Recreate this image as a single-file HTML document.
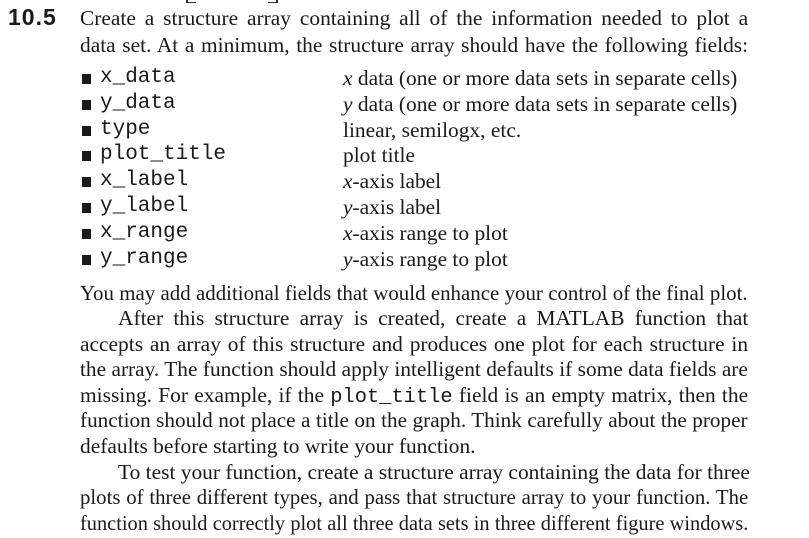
<!DOCTYPE html>
<html><head><meta charset="utf-8"><style>
body{margin:0;width:809px;height:538px;background:#fff;overflow:hidden;position:relative;color:#1a1a1a}
.l{position:absolute;left:80px;font-family:"Liberation Serif",serif;font-size:21px;line-height:26px;white-space:nowrap;transform-origin:0 0;transform:scaleX(1.02);width:655px;text-align:justify;text-align-last:justify}
.i{left:118px;width:618px}
.nj{text-align-last:left}
.m{font-family:"Liberation Mono",monospace;font-size:20px}
.b{position:absolute;left:82px;width:9px;height:10px;background:#1a1a1a}
.c{position:absolute;left:100px;font-family:"Liberation Mono",monospace;font-size:21px;line-height:26px}
.d{position:absolute;left:343px;font-family:"Liberation Serif",serif;font-size:21px;line-height:26px;transform-origin:0 0;transform:scaleX(1.02);white-space:nowrap}
</style></head><body>
<div style="position:absolute;left:186px;top:0;width:2px;height:3px;background:#333"></div>
<div style="position:absolute;left:186px;top:2px;width:10px;height:1px;background:#333"></div>
<div style="position:absolute;left:276px;top:0;width:2px;height:3px;background:#333"></div>
<div style="position:absolute;left:268px;top:2px;width:10px;height:1px;background:#333"></div>
<div style="position:absolute;left:8px;top:4px;font-family:'Liberation Sans',sans-serif;font-weight:bold;font-size:23px;line-height:26px;letter-spacing:1px">10.5</div>
<div class="l" style="top:5px">Create a structure array containing all of the information needed to plot a</div>
<div class="l" style="top:32px">data set. At a minimum, the structure array should have the following fields:</div>
<div class="b" style="top:74px"></div><div class="c" style="top:65px">x_data</div><div class="d" style="top:65px"><i>x</i> data (one or more data sets in separate cells)</div>
<div class="b" style="top:100px"></div><div class="c" style="top:91px">y_data</div><div class="d" style="top:91px"><i>y</i> data (one or more data sets in separate cells)</div>
<div class="b" style="top:126px"></div><div class="c" style="top:117px">type</div><div class="d" style="top:117px">linear, semilogx, etc.</div>
<div class="b" style="top:151px"></div><div class="c" style="top:142px">plot_title</div><div class="d" style="top:142px">plot title</div>
<div class="b" style="top:177px"></div><div class="c" style="top:168px">x_label</div><div class="d" style="top:168px"><i>x</i>-axis label</div>
<div class="b" style="top:203px"></div><div class="c" style="top:194px">y_label</div><div class="d" style="top:194px"><i>y</i>-axis label</div>
<div class="b" style="top:229px"></div><div class="c" style="top:220px">x_range</div><div class="d" style="top:220px"><i>x</i>-axis range to plot</div>
<div class="b" style="top:255px"></div><div class="c" style="top:246px">y_range</div><div class="d" style="top:246px"><i>y</i>-axis range to plot</div>
<div class="l" style="top:280px;transform:scaleX(0.995);width:671px">You may add additional fields that would enhance your control of the final plot.</div>
<div class="l i" style="top:305px">After this structure array is created, create a MATLAB function that</div>
<div class="l" style="top:331px">accepts an array of this structure and produces one plot for each structure in</div>
<div class="l" style="top:356px;transform:scaleX(1.015);width:658px">the array. The function should apply intelligent defaults if some data fields are</div>
<div class="l" style="top:382px">missing. For example, if the <span class="m">plot_title</span> field is an empty matrix, then the</div>
<div class="l" style="top:407px;transform:scaleX(1.01);width:661px">function should not place a title on the graph. Think carefully about the proper</div>
<div class="l nj" style="top:433px">defaults before starting to write your function.</div>
<div class="l i" style="top:459px">To test your function, create a structure array containing the data for three</div>
<div class="l" style="top:484px;transform:scaleX(0.99);width:675px">plots of three different types, and pass that structure array to your function. The</div>
<div class="l" style="top:510px;transform:scaleX(0.97);width:689px">function should correctly plot all three data sets in three different figure windows.</div>
</body></html>
